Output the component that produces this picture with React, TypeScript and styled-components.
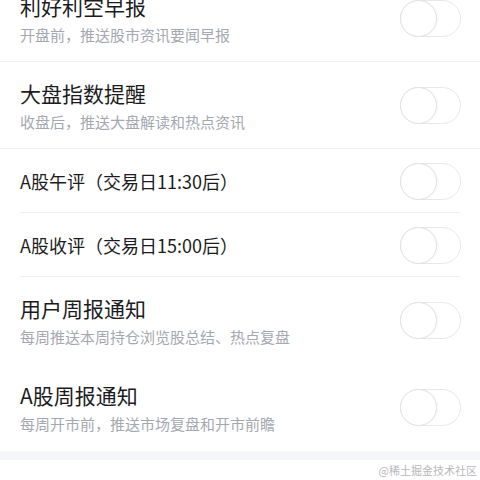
import React from "react";
import styled, { createGlobalStyle } from "styled-components";

const GlobalStyle = createGlobalStyle`
  html, body {
    margin: 0;
    padding: 0;
    background: #ffffff;
    font-family: "Noto Sans CJK SC", "Noto Sans", sans-serif;
  }
  #root {
    height: 480px;
    overflow: hidden;
    position: relative;
  }
`;

interface RowItem {
  title: string;
  desc?: string;
  inset?: boolean;
  last?: boolean;
}

const Page = styled.div`
  margin-top: -25px;
`;

const Section = styled.div`
  background: #ffffff;
`;

const Gap = styled.div`
  height: 9px;
  background: #f5f6f9;
`;

const Row = styled.div<{ $tall: boolean; $inset: boolean; $last: boolean }>`
  position: relative;
  display: flex;
  align-items: center;
  justify-content: space-between;
  height: ${(p) => (p.$tall ? "87px" : "64px")};
  padding: 0 19px 0 20px;
  box-sizing: border-box;
  &::after {
    content: "";
    display: ${(p) => (p.$last ? "none" : "block")};
    position: absolute;
    bottom: 0;
    left: ${(p) => (p.$inset ? "20px" : "0")};
    right: ${(p) => (p.$inset ? "20px" : "0")};
    height: 1px;
    background: #f0f0f2;
  }
`;

const Texts = styled.div`
  display: flex;
  flex-direction: column;
  gap: 4px;
`;

const Title = styled.div<{ $big: boolean }>`
  font-size: ${(p) => (p.$big ? "21px" : "18px")};
  line-height: ${(p) => (p.$big ? "28px" : "24px")};
  color: #1c1c1e;
`;

const Desc = styled.div`
  font-size: 15px;
  line-height: 22px;
  color: #a4a8b0;
`;

const Switch = styled.div`
  position: relative;
  flex: none;
  width: 61px;
  height: 37px;
  border-radius: 19px;
  border: 1px solid #e8e8ea;
  box-sizing: border-box;
  background: #ffffff;
`;

const Knob = styled.div`
  position: absolute;
  left: -1px;
  top: -1px;
  width: 37px;
  height: 37px;
  border-radius: 50%;
  border: 1px solid #e2e2e4;
  box-sizing: border-box;
  background: #ffffff;
  box-shadow: 1px 0 2px rgba(0, 0, 0, 0.04);
`;

const Watermark = styled.div`
  position: absolute;
  right: 3px;
  bottom: 3px;
  font-size: 11px;
  line-height: 14px;
  color: #b8b8bc;
  font-family: "Noto Sans CJK SC", serif;
`;

const first: RowItem[] = [
  { title: "利好利空早报", desc: "开盘前，推送股市资讯要闻早报" },
  { title: "大盘指数提醒", desc: "收盘后，推送大盘解读和热点资讯" },
  { title: "A股午评（交易日11:30后）", inset: true },
  { title: "A股收评（交易日15:00后）", inset: true },
  { title: "用户周报通知", desc: "每周推送本周持仓浏览股总结、热点复盘", last: true },
  { title: "A股周报通知", desc: "每周开市前，推送市场复盘和开市前瞻", last: true },
];

const second: RowItem[] = [
  { title: "自选股异动提醒", desc: "盘中实时推送自选股异动" },
];

const SettingRow: React.FC<{ item: RowItem }> = ({ item }) => (
  <Row $tall={!!item.desc} $inset={!!item.inset} $last={!!item.last}>
    <Texts>
      <Title $big={!!item.desc}>{item.title}</Title>
      {item.desc && <Desc>{item.desc}</Desc>}
    </Texts>
    <Switch>
      <Knob />
    </Switch>
  </Row>
);

export default function App() {
  return (
    <>
      <GlobalStyle />
      <Page>
        <Section>
          {first.map((item, i) => (
            <SettingRow key={i} item={item} />
          ))}
        </Section>
        <Gap />
        <Section>
          {second.map((item, i) => (
            <SettingRow key={i} item={item} />
          ))}
        </Section>
      </Page>
      <Watermark>@稀土掘金技术社区</Watermark>
    </>
  );
}
